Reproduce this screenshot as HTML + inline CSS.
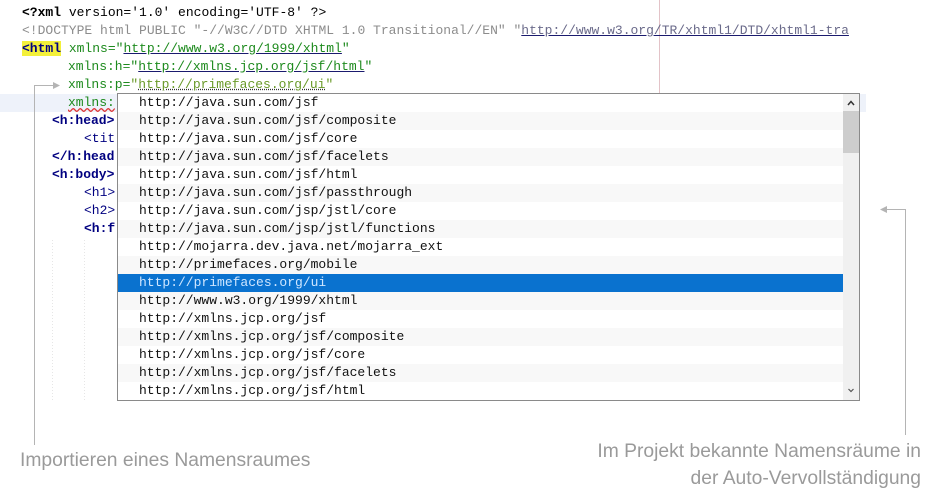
<!DOCTYPE html>
<html><head><meta charset="utf-8"><style>
*{margin:0;padding:0;box-sizing:border-box}
body{width:939px;height:499px;background:#fff;position:relative;overflow:hidden;font-family:"Liberation Mono",monospace;font-size:13px}
.l{position:absolute;height:18px;line-height:18px;white-space:pre;color:#000}
.t{color:#000080;font-weight:bold}
.a{color:#1d8a1d}
.s{color:#1d8a1d}
.u{text-decoration:underline;text-decoration-color:#1a1a6e}
.g{color:#8c8c8c}
.pop{position:absolute;left:117px;top:93px;width:743px;height:308px;border:1px solid #8a8a8a;background:#fff}
.r{position:absolute;left:0;width:725px;height:18px;line-height:18px;padding-left:21px;white-space:pre;color:#111}
.r.o{background:#f8f8f8}
.r.sel{background:#0a72cf;color:#cfe6ff}
.sb{position:absolute;left:725px;top:0;width:16px;height:306px;background:#f0f0f0}
.cap{position:absolute;font-family:"Liberation Sans",sans-serif;font-size:19.3px;color:#9a9a9a;white-space:nowrap}
</style></head><body>
<div style="position:absolute;left:0;top:94px;width:866px;height:18px;background:#eef2fa"></div>
<div style="position:absolute;left:659px;top:0;width:1px;height:93px;background:#e3c3c8"></div>
<div class="l" style="left:22px;top:4px"><span style="font-weight:bold">&lt;?xml</span> version='1.0' encoding='UTF-8' ?&gt;</div>
<div class="l g" style="left:22px;top:22px">&lt;!DOCTYPE html PUBLIC "-//W3C//DTD XHTML 1.0 Transitional//EN" "<span class="u" style="color:#6a6a8a">http://www.w3.org/TR/xhtml1/DTD/xhtml1-tra</span></div>
<div class="l" style="left:22px;top:40px"><span class="t" style="background:#f3f03a">&lt;html</span> <span class="a">xmlns=</span><span class="s">"<span class="u">http://www.w3.org/1999/xhtml</span>"</span></div>
<div class="l" style="left:68px;top:58px"><span class="a">xmlns:h=</span><span class="s">"<span class="u">http://xmlns.jcp.org/jsf/html</span>"</span></div>
<div class="l" style="left:68px;top:76px"><span class="a">xmlns:p=</span><span class="s" style="color:#6a9a2a">"<span style="text-decoration:underline dotted #333">http://primefaces.org/ui</span>"</span></div>
<div class="l" style="left:68px;top:94px"><span class="a" style="text-decoration:underline wavy #d33">xmlns:</span></div>
<div class="l t" style="left:52px;top:112px">&lt;h:head&gt;</div>
<div class="l t" style="left:84px;top:130px;font-weight:normal">&lt;tit</div>
<div class="l t" style="left:52px;top:148px">&lt;/h:head</div>
<div class="l t" style="left:52px;top:166px">&lt;h:body&gt;</div>
<div class="l t" style="left:84px;top:184px;font-weight:normal">&lt;h1&gt;</div>
<div class="l t" style="left:84px;top:202px;font-weight:normal">&lt;h2&gt;</div>
<div class="l t" style="left:84px;top:220px">&lt;h:f</div>
<svg style="position:absolute;left:0;top:0" width="939" height="499">
<g stroke="#b4b4b4" fill="none" stroke-width="1">
<path d="M34.5 445V85.5H54"/><path d="M905.5 435V209.5H886"/>
<path d="M52.5 240V400M84.5 240V400" stroke="#e6e6e6" stroke-dasharray="1 2"/>
</g>
<path d="M60 85.5L53 82V89Z" fill="#b4b4b4"/>
<path d="M880 209.5L887 206V213Z" fill="#b4b4b4"/>
</svg>
<div class="pop">
<div class="r" style="top:0">http://java.sun.com/jsf</div>
<div class="r o" style="top:18px">http://java.sun.com/jsf/composite</div>
<div class="r" style="top:36px">http://java.sun.com/jsf/core</div>
<div class="r o" style="top:54px">http://java.sun.com/jsf/facelets</div>
<div class="r" style="top:72px">http://java.sun.com/jsf/html</div>
<div class="r o" style="top:90px">http://java.sun.com/jsf/passthrough</div>
<div class="r" style="top:108px">http://java.sun.com/jsp/jstl/core</div>
<div class="r o" style="top:126px">http://java.sun.com/jsp/jstl/functions</div>
<div class="r" style="top:144px">http://mojarra.dev.java.net/mojarra_ext</div>
<div class="r o" style="top:162px">http://primefaces.org/mobile</div>
<div class="r sel" style="top:180px">http://primefaces.org/ui</div>
<div class="r o" style="top:198px">http://www.w3.org/1999/xhtml</div>
<div class="r" style="top:216px">http://xmlns.jcp.org/jsf</div>
<div class="r o" style="top:234px">http://xmlns.jcp.org/jsf/composite</div>
<div class="r" style="top:252px">http://xmlns.jcp.org/jsf/core</div>
<div class="r o" style="top:270px">http://xmlns.jcp.org/jsf/facelets</div>
<div class="r" style="top:288px">http://xmlns.jcp.org/jsf/html</div>
<div class="sb">
<svg width="16" height="306" style="position:absolute;left:0;top:0">
<rect x="0" y="17" width="16" height="42" fill="#cdcdcd"/>
<path d="M5 11L8 7.5L11 11" stroke="#333" stroke-width="1.5" fill="none"/>
<path d="M5.5 295L8 297.5L10.5 295" stroke="#555" stroke-width="1.2" fill="none"/>
</svg>
</div>
</div>
<div class="cap" style="left:20px;top:450px">Importieren eines Namensraumes</div>
<div class="cap" style="right:18px;top:438px;text-align:right;line-height:27px">Im Projekt bekannte Namensräume in<br>der Auto-Vervollständigung</div>
</body></html>
